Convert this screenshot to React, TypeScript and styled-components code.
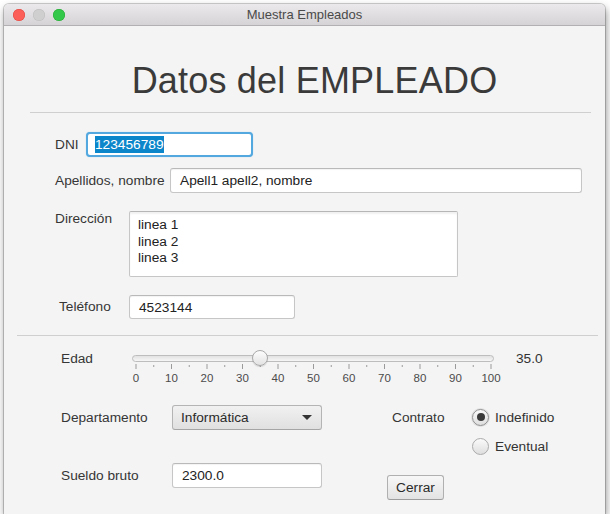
import React from "react";
import styled, { createGlobalStyle } from "styled-components";

const Global = createGlobalStyle`
  html, body { margin: 0; padding: 0; background: #ffffff; }
  body { font-family: "Liberation Sans", Arial, sans-serif; }
  * { box-sizing: border-box; }
`;

const Window = styled.div`
  margin: 4px 0 0 4px;
  width: 601px;
  height: 510px;
  background: #f4f4f4;
  border-radius: 5px 5px 0 0;
  box-shadow: 0 0 0 1px rgba(0,0,0,0.18), 1px 4px 9px rgba(0,0,0,0.45);
  overflow: hidden;
  display: flex;
  flex-direction: column;
  color: #333;
  font-size: 13.7px;
`;

const TitleBar = styled.div`
  height: 22px;
  flex: none;
  display: flex;
  align-items: center;
  position: relative;
  background: linear-gradient(#ebe9eb, #d5d3d5);
  border-bottom: 1px solid #b2b0b2;
  padding-left: 9px;
  gap: 8px;
`;

const Light = styled.span<{ $c: string; $b: string }>`
  width: 12px;
  height: 12px;
  border-radius: 50%;
  background: ${(p) => p.$c};
  box-shadow: inset 0 0 0 0.5px ${(p) => p.$b};
`;

const WinTitle = styled.div`
  position: absolute;
  left: 0;
  right: 0;
  text-align: center;
  font-size: 13px;
  color: #4a4a4a;
  pointer-events: none;
`;

const Content = styled.div`
  flex: 1;
  display: flex;
  flex-direction: column;
`;

const Heading = styled.h1`
  margin: 34px 14px 0 26px;
  padding-left: 8px;
  font-size: 36px;
  line-height: 42px;
  font-weight: normal;
  text-align: center;
  color: #3a3a3a;
  letter-spacing: 0.2px;
`;

const Rule = styled.div<{ $l: number; $r: number; $t: number }>`
  height: 1px;
  background: #cfcfcf;
  margin: ${(p) => p.$t}px ${(p) => p.$r}px 0 ${(p) => p.$l}px;
`;

const Row = styled.div<{ $t: number; $l: number; $top?: boolean }>`
  display: flex;
  align-items: ${(p) => (p.$top ? "flex-start" : "center")};
  margin-top: ${(p) => p.$t}px;
  padding-left: ${(p) => p.$l}px;
`;

const Label = styled.span<{ $w: number; $pt?: number }>`
  width: ${(p) => p.$w}px;
  flex: none;
  color: #363636;
  line-height: 16px;
  padding-top: ${(p) => p.$pt ?? 0}px;
  white-space: nowrap;
`;

const Field = styled.div<{ $w: number; $h?: number }>`
  width: ${(p) => p.$w}px;
  height: ${(p) => p.$h ?? 25}px;
  background: #fff;
  border: 1px solid #c6c6c6;
  border-top-color: #b9b9b9;
  border-radius: 3px;
  padding-left: 9px;
  display: flex;
  align-items: center;
  color: #222;
  box-shadow: inset 0 1px 1px rgba(0,0,0,0.05);
`;

const FocusField = styled(Field)`
  border: 2px solid #52a8df;
  border-radius: 4px;
  padding-left: 7px;
  box-shadow: 0 0 1px rgba(82,168,223,0.6);
`;

const Selected = styled.span`
  background: #0c86cb;
  color: #fff;
  line-height: 17px;
`;

const Area = styled.div`
  width: 329px;
  height: 66px;
  background: #fff;
  border: 1px solid #c6c6c6;
  border-top-color: #b6b6b6;
  border-radius: 2px;
  padding: 5px 8px 0;
  line-height: 16.5px;
  color: #222;
  box-shadow: inset 0 2px 2px rgba(0,0,0,0.06);
`;

const SliderRow = styled.div`
  display: flex;
  align-items: flex-start;
  margin-top: 16px;
  padding-left: 57px;
`;

const SliderLabel = styled.span`
  width: 71px;
  flex: none;
  line-height: 14px;
  color: #363636;
`;

const Slider = styled.div`
  width: 362px;
  flex: none;
  display: flex;
  flex-direction: column;
`;

const TrackArea = styled.div`
  position: relative;
  height: 12px;
  display: flex;
  align-items: center;
`;

const Track = styled.div`
  width: 100%;
  height: 7px;
  border-radius: 4px;
  border: 1px solid #bdbdbd;
  background: linear-gradient(#e2e2e2, #f6f6f6);
`;

const Thumb = styled.div`
  position: absolute;
  top: -2px;
  width: 16px;
  height: 16px;
  border-radius: 50%;
  border: 1px solid #a9a9a9;
  background: linear-gradient(#fdfdfd, #e2e2e2);
  box-shadow: 0 1px 1px rgba(0,0,0,0.12);
`;

const TickLabels = styled.div`
  display: grid;
  grid-template-columns: repeat(11, 35.5px);
  margin: 2px 0 0 -13.75px;
  font-size: 11.5px;
  line-height: 14px;
  color: #4b4b4b;
  text-align: center;
`;

const Value = styled.span`
  margin-left: 22px;
  line-height: 14px;
  color: #333;
`;

const Lower = styled.div`
  display: flex;
  margin-top: 20px;
  padding-left: 57px;
`;

const Col = styled.div<{ $gap: number; $ml?: number }>`
  display: flex;
  flex-direction: column;
  align-items: flex-start;
  gap: ${(p) => p.$gap}px;
  margin-left: ${(p) => p.$ml ?? 0}px;
`;

const LRow = styled.div`
  display: flex;
  align-items: center;
`;

const Combo = styled.div`
  width: 150px;
  height: 25px;
  border: 1px solid #b4b4b4;
  border-bottom-color: #a5a5a5;
  border-radius: 3px;
  background: linear-gradient(#f1f1f1, #e0e0e0);
  display: flex;
  align-items: center;
  justify-content: space-between;
  padding: 0 9px 0 8px;
  color: #2a2a2a;
`;

const Arrow = styled.span`
  width: 0;
  height: 0;
  border-left: 5px solid transparent;
  border-right: 5px solid transparent;
  border-top: 5px solid #333;
`;

const ContratoRow = styled.div`
  display: flex;
  align-items: flex-start;
  padding-left: 5px;
`;

const ContratoLabel = styled.span`
  width: 80px;
  line-height: 25px;
  color: #363636;
`;

const Radios = styled.div`
  display: flex;
  flex-direction: column;
  gap: 13px;
  margin-top: 4px;
`;

const RadioItem = styled.label`
  display: flex;
  align-items: center;
  gap: 6px;
  height: 16px;
  color: #333;
`;

const RadioCircle = styled.span<{ $on?: boolean }>`
  width: 17px;
  height: 17px;
  border-radius: 50%;
  border: 1px solid ${(p) => (p.$on ? "#8e8e8e" : "#ababab")};
  background: linear-gradient(#fafafa, #dedede);
  display: flex;
  align-items: center;
  justify-content: center;
  box-shadow: ${(p) => (p.$on ? "0 0 0 1px rgba(0,0,0,0.08)" : "none")};
  &::after {
    content: "";
    width: 8px;
    height: 8px;
    border-radius: 50%;
    background: #3a3a3a;
    display: ${(p) => (p.$on ? "block" : "none")};
  }
`;

const Button = styled.button`
  margin-top: 21px;
  width: 57px;
  height: 25px;
  border: 1px solid #b0b0b0;
  border-bottom-color: #9d9d9d;
  border-radius: 3px;
  background: linear-gradient(#f7f7f7, #e3e3e3);
  font-family: inherit;
  font-size: 13.7px;
  color: #2a2a2a;
  padding: 0;
`;

const ticks = Array.from({ length: 11 }, (_, i) => i * 10);

export default function App() {
  const value = 35;
  const thumbLeft = 4 + (value / 100) * 355 - 8;
  return (
    <>
      <Global />
      <Window>
        <TitleBar>
          <Light $c="#fc5f57" $b="#e0443e" />
          <Light $c="#cfcfcf" $b="#bdbdbd" />
          <Light $c="#34c84a" $b="#24a732" />
          <WinTitle>Muestra Empleados</WinTitle>
        </TitleBar>
        <Content>
          <Heading>Datos del EMPLEADO</Heading>
          <Rule $l={26} $r={14} $t={10} />

          <Row $t={19} $l={51}>
            <Label $w={31}>DNI</Label>
            <FocusField $w={167}>
              <Selected>123456789</Selected>
            </FocusField>
          </Row>

          <Row $t={11} $l={51}>
            <Label $w={115}>Apellidos, nombre</Label>
            <Field $w={412}>Apell1 apell2, nombre</Field>
          </Row>

          <Row $t={18} $l={51} $top>
            <Label $w={74}>Dirección</Label>
            <Area>
              linea 1
              <br />
              linea 2
              <br />
              linea 3
            </Area>
          </Row>

          <Row $t={18} $l={55}>
            <Label $w={70}>Teléfono</Label>
            <Field $w={166} $h={24}>4523144</Field>
          </Row>

          <Rule $l={13} $r={7} $t={16} />

          <SliderRow>
            <SliderLabel>Edad</SliderLabel>
            <Slider>
              <TrackArea>
                <Track />
                <Thumb style={{ left: `${thumbLeft}px` }} />
              </TrackArea>
              <svg width="362" height="5" viewBox="0 0 362 5">
                {Array.from({ length: 21 }, (_, i) => {
                  const x = 4 + i * 17.75;
                  const major = i % 2 === 0;
                  return (
                    <line
                      key={i}
                      x1={x}
                      x2={x}
                      y1={major ? 0 : 1}
                      y2={major ? 5 : 3}
                      stroke="#9a9a9a"
                      strokeWidth="1"
                    />
                  );
                })}
              </svg>
              <TickLabels>
                {ticks.map((t) => (
                  <span key={t}>{t}</span>
                ))}
              </TickLabels>
            </Slider>
            <Value>35.0</Value>
          </SliderRow>

          <Lower>
            <Col $gap={33}>
              <LRow>
                <Label $w={111}>Departamento</Label>
                <Combo>
                  <span>Informática</span>
                  <Arrow />
                </Combo>
              </LRow>
              <LRow>
                <Label $w={111}>Sueldo bruto</Label>
                <Field $w={150}>2300.0</Field>
              </LRow>
            </Col>
            <Col $gap={0} $ml={65}>
              <ContratoRow>
                <ContratoLabel>Contrato</ContratoLabel>
                <Radios>
                  <RadioItem>
                    <RadioCircle $on />
                    Indefinido
                  </RadioItem>
                  <RadioItem>
                    <RadioCircle />
                    Eventual
                  </RadioItem>
                </Radios>
              </ContratoRow>
              <Button>Cerrar</Button>
            </Col>
          </Lower>
        </Content>
      </Window>
    </>
  );
}
